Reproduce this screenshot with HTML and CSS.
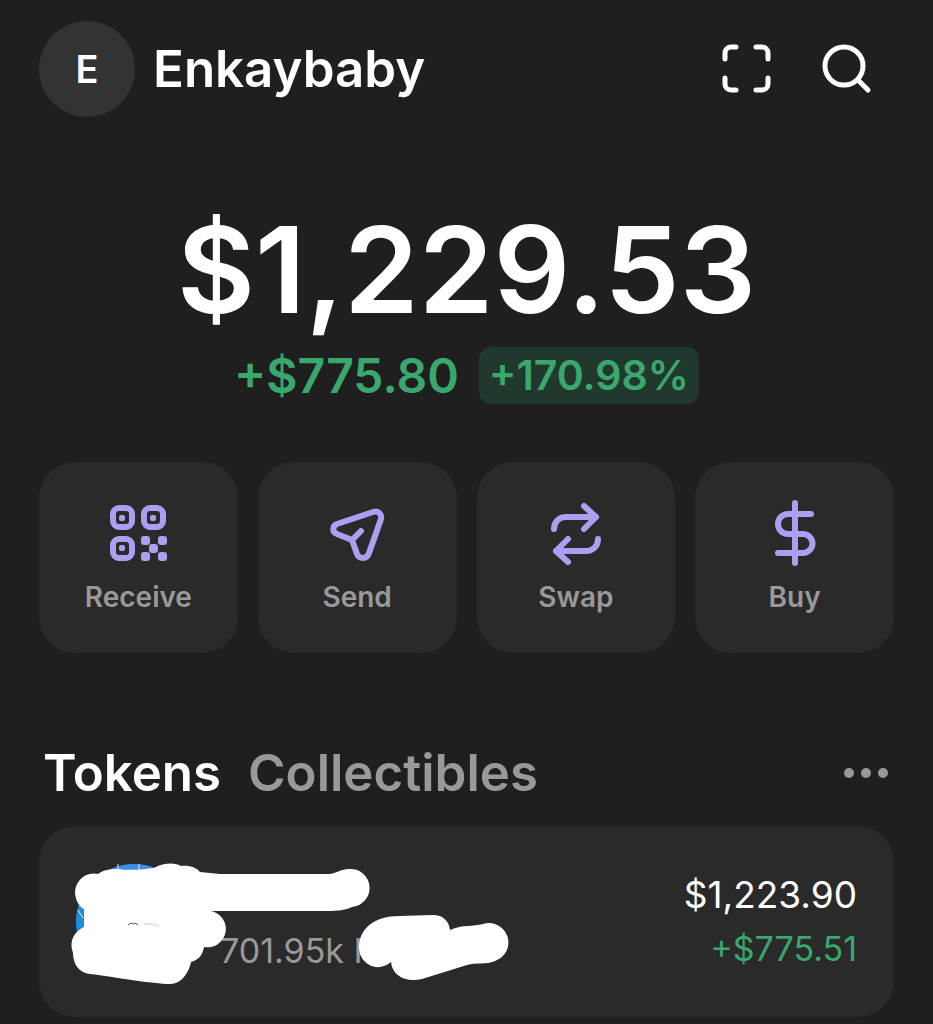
FILE: index.html
```html
<!DOCTYPE html>
<html lang="en">
<head>
    <meta charset="UTF-8">
    <meta name="viewport" content="width=device-width, initial-scale=1.0">
    <title>Wallet</title>
    <link rel="stylesheet" href="styles.css">
</head>
<body>
    <header class="header">
        <button type="button" class="account">
            <span class="avatar">E</span>
            <span class="account-name">Enkaybaby</span>
        </button>
        <div class="header-actions">
            <button type="button" class="icon-button" aria-label="Scan">
                <svg width="50" height="50" viewBox="0 0 50 50" class="icon-line">
                    <path d="M3 15V9a6 6 0 0 1 6-6h5M34 3h6a6 6 0 0 1 6 6v6M46 34v6a6 6 0 0 1-6 6h-6M14 46H9a6 6 0 0 1-6-6v-6"/>
                </svg>
            </button>
            <button type="button" class="icon-button" aria-label="Search">
                <svg width="50" height="50" viewBox="0 0 50 50" class="icon-line">
                    <circle cx="22" cy="22" r="19"/>
                    <path d="M36 36L46 46"/>
                </svg>
            </button>
        </div>
    </header>

    <main>
        <section class="balance">
            <h1 class="total">$1,229.53</h1>
            <div class="change">
                <span class="change-amount">+$775.80</span>
                <span class="change-badge">+170.98%</span>
            </div>
        </section>

        <nav class="actions">
            <button type="button" class="action">
                <svg width="68" height="68" viewBox="0 0 68 68" class="action-icon">
                    <rect x="9" y="8" width="19" height="19" rx="6"/>
                    <rect x="40" y="8" width="19" height="19" rx="6"/>
                    <rect x="9" y="39" width="19" height="19" rx="6"/>
                    <g class="solid">
                        <rect x="15" y="15" width="6" height="6" rx="2"/>
                        <rect x="46" y="15" width="6" height="6" rx="2"/>
                        <rect x="15" y="45" width="6" height="6" rx="2"/>
                        <rect x="37" y="36" width="9" height="9" rx="3"/>
                        <rect x="54" y="36" width="9" height="9" rx="3"/>
                        <rect x="45" y="44" width="9" height="9" rx="3"/>
                        <rect x="37" y="52" width="9" height="9" rx="3"/>
                        <rect x="54" y="52" width="9" height="9" rx="3"/>
                    </g>
                </svg>
                <span>Receive</span>
            </button>
            <button type="button" class="action">
                <svg width="68" height="68" viewBox="0 0 68 68" class="action-icon">
                    <path d="M14 24L50 12C55 10 59 14 58 19L46 53C44 60 36 59 34 54L29 40L14 34C9 32 9 26 14 24ZM29 40L38 31"/>
                </svg>
                <span>Send</span>
            </button>
            <button type="button" class="action">
                <svg width="68" height="68" viewBox="0 0 68 68" class="action-icon">
                    <path d="M12 29C12 22 17 17 24 17H54M42 6L54 17L42 29"/>
                    <path d="M56 39C56 46 51 51 44 51H14M26 39L14 51L26 62"/>
                </svg>
                <span>Swap</span>
            </button>
            <button type="button" class="action">
                <svg width="68" height="68" viewBox="0 0 68 68" class="action-icon">
                    <path d="M34 3V63M50 14H27a10 10 0 0 0 0 20H42a9 9 0 0 1 0 19H17"/>
                </svg>
                <span>Buy</span>
            </button>
        </nav>

        <section>
            <div class="tabs">
                <button type="button" class="tab active">Tokens</button>
                <button type="button" class="tab">Collectibles</button>
                <button type="button" class="icon-button more" aria-label="More">
                    <svg width="44" height="10" viewBox="0 0 44 10" fill="currentColor">
                        <circle cx="5" cy="5" r="5"/>
                        <circle cx="22" cy="5" r="5"/>
                        <circle cx="39" cy="5" r="5"/>
                    </svg>
                </button>
            </div>

            <div class="token">
                <svg class="token-logo" width="116" height="116" viewBox="0 0 116 116">
                    <defs>
                        <linearGradient id="logo-fill" x1="1" y1="0" x2="0" y2="1">
                            <stop offset="0" stop-color="#4c8df0"/>
                            <stop offset="1" stop-color="#0c8ed2"/>
                        </linearGradient>
                    </defs>
                    <circle cx="58" cy="58" r="58" fill="url(#logo-fill)"/>
                    <path d="M42 0v7M63 0v7M2 46l5 8" stroke="#d5ebff" stroke-width="1" fill="none"/>
                </svg>
                <p class="token-amount">701.95k I</p>
                <div class="token-value">
                    <p class="value">$1,223.90</p>
                    <p class="gain">+$775.51</p>
                </div>
                <!-- brush strokes over the token name -->
                <svg class="scribble" width="500" height="191" viewBox="39 826 500 191">
                    <path d="M75 892A19 19 0 0 1 98 874C105 869 112 869 119 869C130 871 145 869 154 868C165 862 176 863 181 866C190 865 197 868 200 872L220 874H330C337 873 341 869 349 869A19 19 0 0 1 352 907C346 910 337 911 328 911H211A18 18 0 0 1 204 947C203 954 199 960 191 962C189 972 182 984 170 984C153 984 115 977 90 974C79 973 73 964 73 953C69 943 73 932 84 927V909C78 906 75 898 75 892Z"/>
                    <path d="M359 949C358 930 373 916 400 916L433 915C443 915 449 921 450 930C463 924 473 927 483 924A19 19 0 0 1 495 961C486 965 476 962 467 965L422 979C405 983 392 975 391 962A19 19 0 0 1 359 949Z"/>
                    <path d="M128 925l3-2l2 1l2-1l3 2" class="scribble-mark"/>
                    <path d="M144 924h7l8 2" class="scribble-tint"/>
                </svg>
            </div>
        </section>
    </main>
</body>
</html>
```
FILE: styles.css
```css
* {
    box-sizing: border-box;
}

body {
    margin: 0;
    padding: 21px 39px 7px;
    background-color: #1f1f1f;
    color: #fff;
    font-family: Inter, "Liberation Sans", sans-serif;
}

h1,
p {
    margin: 0;
}

button {
    padding: 0;
    border: none;
    background: none;
    color: inherit;
    font-family: inherit;
    cursor: pointer;
}

svg {
    display: block;
}

.header {
    display: flex;
    justify-content: space-between;
    align-items: center;
    padding-right: 22px;
}

.account {
    display: flex;
    align-items: center;
    gap: 18px;
}

.avatar {
    display: flex;
    justify-content: center;
    align-items: center;
    width: 96px;
    height: 96px;
    border-radius: 50%;
    background-color: #333;
    font-size: 38px;
    font-weight: 600;
}

.account-name {
    font-size: 51px;
    font-weight: 600;
    line-height: 60px;
}

.header-actions {
    display: flex;
    gap: 50px;
}

.icon-line {
    fill: none;
    stroke: #fff;
    stroke-width: 5;
    stroke-linecap: round;
}

.balance {
    padding-top: 83px;
    text-align: center;
}

.total {
    font-size: 120px;
    font-weight: 600;
    line-height: 140px;
}

.change {
    display: flex;
    justify-content: center;
    align-items: center;
    gap: 20px;
    margin-top: 7px;
    color: #3aa76d;
    font-weight: 600;
}

.change-amount {
    font-size: 48px;
    line-height: 57px;
}

.change-badge {
    padding: 0 10px;
    border-radius: 12px;
    background-color: #21382c;
    font-size: 41px;
    line-height: 57px;
}

.actions {
    display: grid;
    grid-template-columns: repeat(4, 1fr);
    gap: 20px;
    margin-top: 58px;
}

.action {
    display: flex;
    flex-direction: column;
    align-items: center;
    gap: 13px;
    padding: 38px 0 40px;
    border-radius: 36px;
    background-color: #2a2a2a;
    color: #999;
    font-size: 28px;
    font-weight: 600;
    line-height: 32px;
}

.action-icon {
    fill: none;
    stroke: #ab9ff2;
    stroke-width: 6;
    stroke-linecap: round;
    stroke-linejoin: round;
}

.action-icon .solid {
    fill: #ab9ff2;
    stroke: none;
}

.tabs {
    display: flex;
    align-items: center;
    gap: 27px;
    margin-top: 90px;
    padding: 0 6px 0 4px;
}

.tab {
    color: #999;
    font-size: 51px;
    font-weight: 600;
    line-height: 60px;
}

.tab.active {
    color: #fff;
}

.more {
    margin-left: auto;
    color: #999;
}

.token {
    display: flex;
    align-items: center;
    position: relative;
    margin-top: 23px;
    padding: 38px 37px 37px;
    border-radius: 36px;
    background-color: #2a2a2a;
}

.token-amount {
    align-self: flex-end;
    margin-left: 28px;
    padding-bottom: 2px;
    color: #999;
    font-size: 34px;
    line-height: 54px;
}

.token-value {
    margin-left: auto;
    text-align: right;
    line-height: 54px;
}

.value {
    font-size: 37px;
}

.gain {
    color: #3aa76d;
    font-size: 34px;
}

.scribble {
    position: absolute;
    top: 0;
    left: 0;
    fill: #fff;
}

.scribble-mark {
    fill: none;
    stroke: #555;
}

.scribble-tint {
    fill: none;
    stroke: #f6dede;
    stroke-width: 2;
}
```
